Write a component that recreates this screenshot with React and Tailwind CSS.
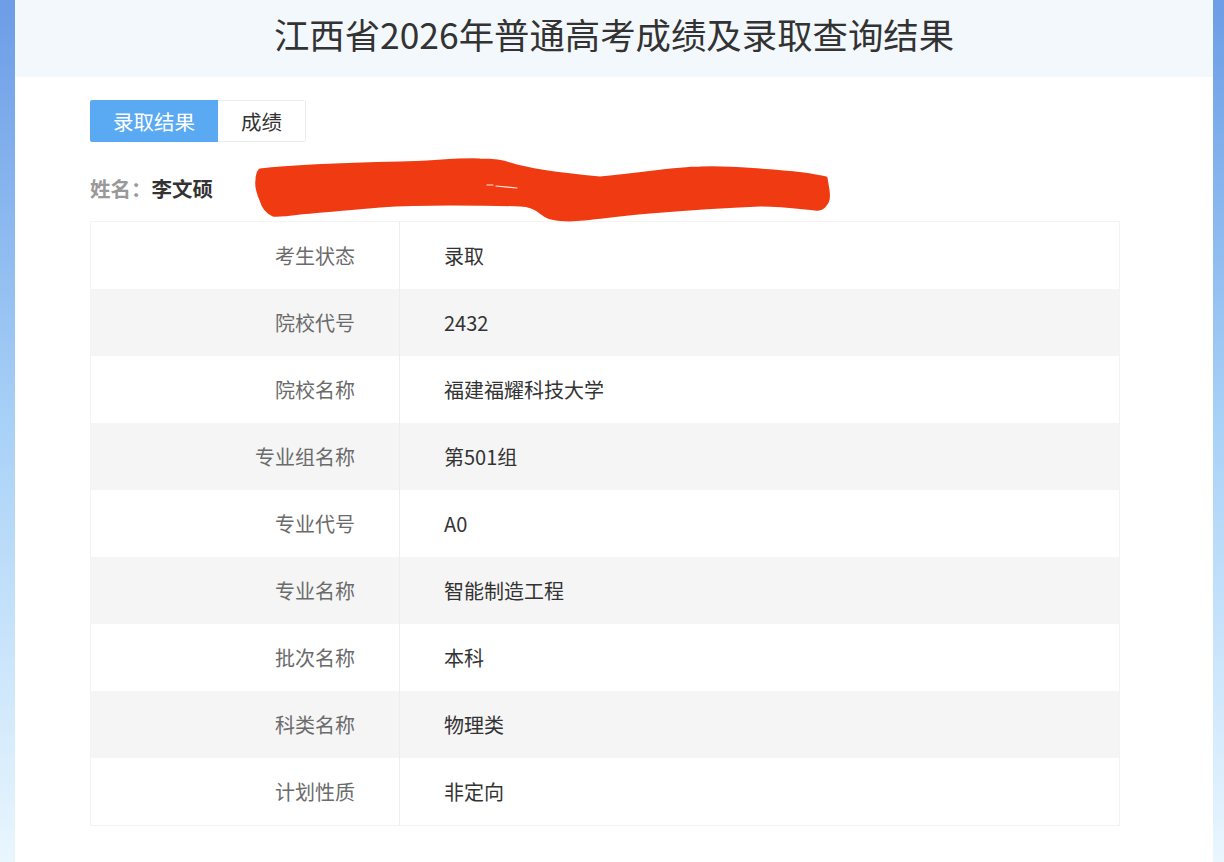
import React from "react";

const rows = [
  ["考生状态", "录取"],
  ["院校代号", "2432"],
  ["院校名称", "福建福耀科技大学"],
  ["专业组名称", "第501组"],
  ["专业代号", "A0"],
  ["专业名称", "智能制造工程"],
  ["批次名称", "本科"],
  ["科类名称", "物理类"],
  ["计划性质", "非定向"],
];

// hand-drawn redaction stroke over the ID number
function Scribble() {
  return (
    <svg
      className="absolute left-[165px] top-[-13px] pointer-events-none"
      width="580"
      height="70"
      viewBox="0 0 580 70"
    >
      <path
        d="M5 15 C 40 11, 100 9, 145 8 C 180 7, 205 4, 225 5 C 240 5, 248 6, 255 9 C 270 14, 290 18, 345 23 C 390 19, 420 13, 445 13 C 470 12, 490 14, 505 15 C 535 17, 560 20, 571 23 L 573 35 C 574 42, 573 47, 571 49 C 568 54, 565 55, 560 54 C 540 52, 525 50, 505 50 C 460 52, 420 55, 395 57 C 360 60, 335 64, 315 65 C 300 65, 292 63, 288 59 C 280 52, 272 50, 265 50 C 240 49, 215 49, 195 49 C 160 49, 140 50, 125 51 C 90 54, 60 57, 45 58 C 30 60, 22 61, 18 60 C 12 57, 8 52, 6 45 C 3 38, 1 30, 2 25 C 2 20, 3 17, 5 15 Z"
        fill="#f03a12"
        stroke="#f03a12"
        strokeWidth="3"
        strokeLinejoin="round"
      />
      <path d="M232 30 L 238 30 M 241 31 L 262 33" stroke="#fde9e3" strokeWidth="1.2" strokeLinecap="round" />
    </svg>
  );
}

export default function App() {
  return (
    <div
      className="flex h-[862px] pl-[15px] pr-[11px] bg-gradient-to-b from-[#6c9de6] via-[#a9d2f7] to-[#e9f6fe]"
      style={{ fontFamily: '"Noto Sans CJK SC", "Noto Sans", sans-serif' }}
    >
      <div className="flex-1 bg-white flex flex-col">
        {/* page title */}
        <div className="h-[77px] bg-[#f3f8fc] flex items-center justify-center">
          <h1 className="text-[35.4px] text-[#333] leading-none pb-[10px]">
            江西省2026年普通高考成绩及录取查询结果
          </h1>
        </div>

        <div className="pl-[75px] pr-[90px]">
          {/* tabs */}
          <div className="mt-[23px] flex">
            <div className="h-[42px] px-[23px] flex items-center bg-[#5aa9f3] text-white text-[20.5px] rounded-l-[2px]">
              录取结果
            </div>
            <div className="h-[42px] px-[23px] flex items-center border border-l-0 border-[#ececec] text-[#333] text-[20.5px] rounded-r-[2px]">
              成绩
            </div>
          </div>

          {/* candidate name */}
          <div className="relative mt-[26px] h-[40px] flex items-center text-[20.5px] font-bold">
            <span className="text-[#999]">姓名：</span>
            <span className="text-[#333]">李文硕</span>
            <span className="ml-[44px] text-[#999]">准考证号：</span>
            <Scribble />
          </div>

          {/* admission detail table */}
          <div className="mt-[13px] w-[1030px] border border-[#f3f3f3] text-[20px]">
            {rows.map(([label, value], i) => (
              <div
                key={label}
                className={`flex h-[67px] ${i % 2 === 1 ? "bg-[#f5f5f5]" : "bg-white"}`}
              >
                <div className="w-[309px] pr-[44px] flex items-center justify-end text-[#6b6b6b] border-r border-[#ededed]">
                  {label}
                </div>
                <div className="flex-1 pl-[44px] flex items-center text-[#333]">
                  {value}
                </div>
              </div>
            ))}
          </div>
        </div>
      </div>
    </div>
  );
}
